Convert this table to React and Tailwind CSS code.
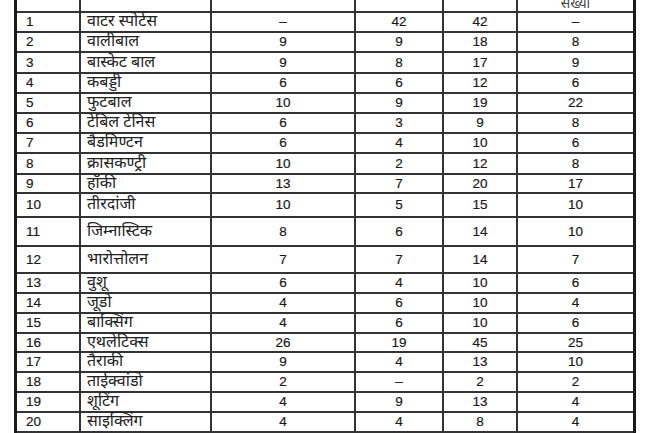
import React from "react";

const rows = [
  ["1", "वाटर स्पोर्टस", "–", "42", "42", "–", 20],
  ["2", "वालीबाल", "9", "9", "18", "8", 20],
  ["3", "बास्केट बाल", "9", "8", "17", "9", 21],
  ["4", "कबड्डी", "6", "6", "12", "6", 20],
  ["5", "फुटबाल", "10", "9", "19", "22", 20],
  ["6", "टेबिल टेनिस", "6", "3", "9", "8", 20],
  ["7", "बैडमिण्टन", "6", "4", "10", "6", 20],
  ["8", "क्रासकण्ट्री", "10", "2", "12", "8", 21],
  ["9", "हॉकी", "13", "7", "20", "17", 19],
  ["10", "तीरदांजी", "10", "5", "15", "10", 24],
  ["11", "जिम्नास्टिक", "8", "6", "14", "10", 29],
  ["12", "भारोत्तोलन", "7", "7", "14", "7", 27],
  ["13", "वुशू", "6", "4", "10", "6", 20],
  ["14", "जूडो", "4", "6", "10", "4", 20],
  ["15", "बाक्सिंग", "4", "6", "10", "6", 20],
  ["16", "एथलेटिक्स", "26", "19", "45", "25", 19],
  ["17", "तैराकी", "9", "4", "13", "10", 20],
  ["18", "ताईक्वांडो", "2", "–", "2", "2", 20],
  ["19", "शूटिंग", "4", "9", "13", "4", 20],
  ["20", "साइक्लिंग", "4", "4", "8", "4", 20],
];

const line = "border-r-2 border-[#333]";
const deva = "font-['Noto_Sans_Devanagari','Lohit_Devanagari','Noto_Sans',sans-serif] [-webkit-text-stroke:0px]";

function Row({ r }) {
  const h = r[6];
  return (
    <div className="flex border-b-2 border-[#333]" style={{ height: h }}>
      <div className={`w-[64px] ${line} flex items-center pl-[9px]`}>{r[0]}</div>
      <div className={`w-[131px] ${line} flex items-center pl-[6px] pt-[2px] text-[16px] text-[#222] ${deva}`}>
        {r[1]}
      </div>
      <div className={`w-[144px] ${line} flex items-center justify-center`}>{r[2]}</div>
      <div className={`w-[88px] ${line} flex items-center justify-center`}>{r[3]}</div>
      <div className={`w-[74px] ${line} flex items-center justify-center`}>{r[4]}</div>
      <div className="w-[115px] flex items-center justify-center">{r[5]}</div>
    </div>
  );
}

export default function App() {
  return (
    <div className="w-[650px] h-[433px] overflow-hidden bg-white font-['Liberation_Sans',Arial,sans-serif] text-[13.5px] text-[#1a1a1a] leading-none [-webkit-text-stroke:0.2px_#1a1a1a]">
      <div className="ml-[14px] w-[622px] border-l-[3px] border-r-[3px] border-[#1a1a1a]">
        <div className="flex h-[13px] border-b-2 border-[#333] overflow-hidden">
          <div className={`w-[64px] ${line}`}></div>
          <div className={`w-[131px] ${line}`}></div>
          <div className={`w-[144px] ${line}`}></div>
          <div className={`w-[88px] ${line}`}></div>
          <div className={`w-[74px] ${line}`}></div>
          <div className="w-[115px] flex items-end justify-center overflow-hidden">
            <span className={`text-[14px] leading-[18px] mb-[-3px] text-[#444] ${deva}`}>
              संख्या
            </span>
          </div>
        </div>
        {rows.map((r) => (
          <Row key={r[0]} r={r} />
        ))}
      </div>
    </div>
  );
}
